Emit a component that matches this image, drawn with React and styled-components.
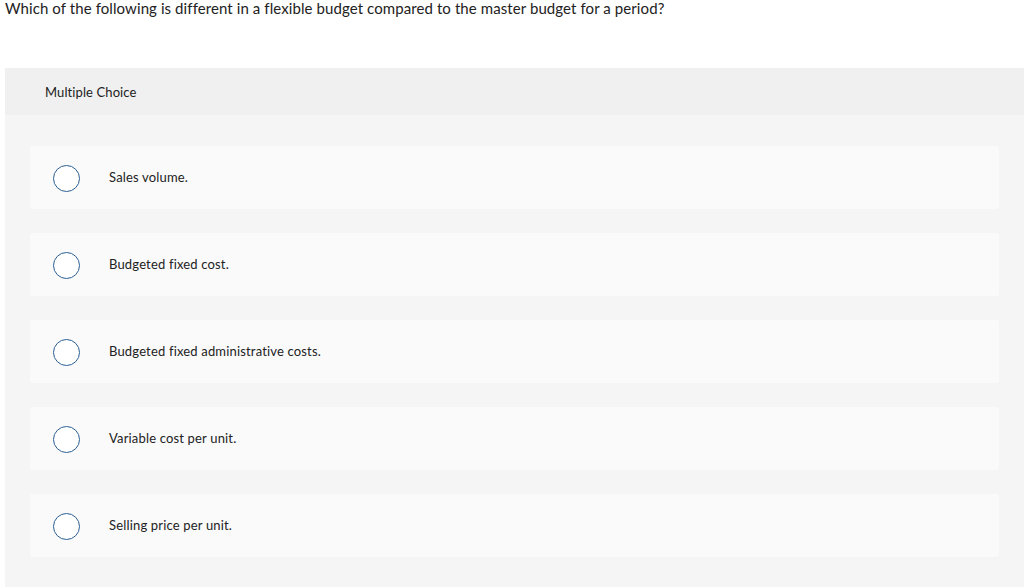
import React from "react";
import styled, { createGlobalStyle } from "styled-components";

const Global = createGlobalStyle`
  html, body { margin: 0; padding: 0; background: #fff; }
  body {
    font-family: Lato, "Open Sans", Arial, sans-serif;
    color: #333;
    font-variant-ligatures: none;
  }
`;

const Page = styled.div`
  padding: 0 0 0 5px;
  overflow: hidden;
  height: 587px;
`;

const Question = styled.div`
  font-size: 15px;
  line-height: 16px;
  color: #222;
  height: 68px;
  letter-spacing: 0.09px;
`;

const Panel = styled.div`
  background: #f5f5f5;
  min-height: 530px;
`;

const Header = styled.div`
  background: #f0f0f0;
  height: 47px;
  display: flex;
  align-items: center;
  padding-left: 40px;
  font-size: 13px;
  color: #222;
  letter-spacing: 0.1px;
`;

const List = styled.div`
  display: flex;
  flex-direction: column;
  gap: 24px;
  padding: 31px 25px 30px 25px;
`;

const Option = styled.label`
  display: flex;
  align-items: center;
  height: 63px;
  background: #fafafa;
  border-radius: 3px;
  padding-left: 23px;
  font-size: 13px;
  line-height: 15px;
  color: #222;
  letter-spacing: 0.17px;
  cursor: pointer;
`;

const Radio = styled.span`
  width: 25px;
  height: 25px;
  border: 1.5px solid #2b5f93;
  border-radius: 50%;
  background: #fff;
  flex: 0 0 auto;
  margin-right: 29px;
  margin-top: 1px;
`;

const Label = styled.span`
  margin-top: -1px;
`;

const options = [
  "Sales volume.",
  "Budgeted fixed cost.",
  "Budgeted fixed administrative costs.",
  "Variable cost per unit.",
  "Selling price per unit.",
];

export default function App() {
  return (
    <>
      <Global />
      <Page>
        <Question>
          Which of the following is different in a flexible budget compared to the master budget for a period?
        </Question>
        <Panel>
          <Header>Multiple Choice</Header>
          <List>
            {options.map((o) => (
              <Option key={o}>
                <Radio />
                <Label>{o}</Label>
              </Option>
            ))}
          </List>
        </Panel>
      </Page>
    </>
  );
}
